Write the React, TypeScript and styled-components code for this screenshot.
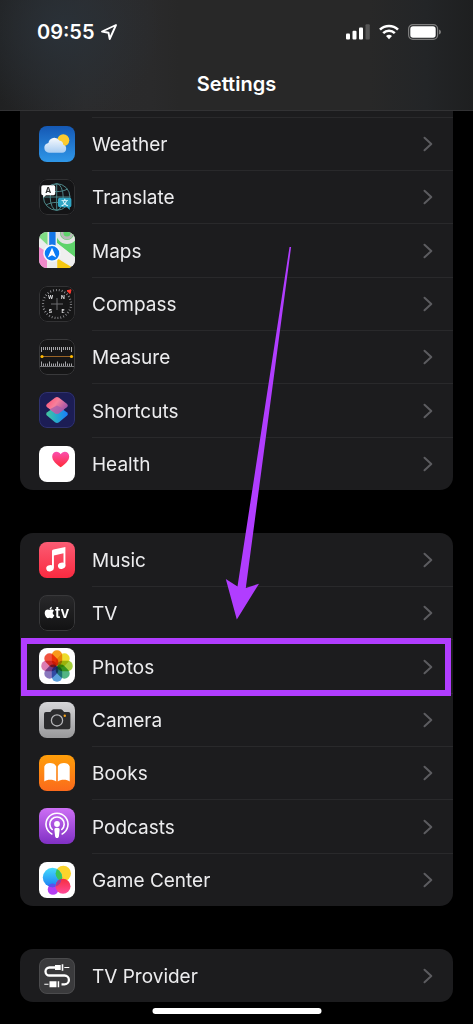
import React from 'react';
import styled, { createGlobalStyle, css } from 'styled-components';
import { FaApple } from 'react-icons/fa';

const GlobalStyle = createGlobalStyle`
  *, *::before, *::after { box-sizing: border-box; }
  body {
    margin: 0;
    background: #000;
    color: #ececee;
    font-family: Inter, 'Liberation Sans', sans-serif;
  }
`;

const Screen = styled.div`
  position: relative;
  min-height: 100vh;
  background: #000;
`;

const Header = styled.header`
  position: sticky;
  top: 0;
  z-index: 1;
  border-bottom: 1px solid #323234;
  background:
    radial-gradient(circle 96px at 64px 28px, #2a3138, #2a313800),
    linear-gradient(90deg, #202122, #2b2b2c 18%, #2a2a2b 32%, #282828 38%, #282828 78%, #232527 90%, #1e1f20);
`;

const StatusBar = styled.div`
  display: flex;
  justify-content: space-between;
  align-items: center;
  height: 64px;
  padding: 0 31px 0 37px;
`;

const StatusGroup = styled.div<{ $gap: number }>`
  display: flex;
  align-items: center;
  gap: ${(p) => p.$gap}px;
`;

const Clock = styled.time`
  font-size: 20px;
  font-weight: 600;
  line-height: 24px;
  color: #fff;
`;

const Title = styled.h1`
  margin: 0;
  padding: 8px 0 14px;
  font-size: 20px;
  font-weight: 600;
  line-height: 24px;
  text-align: center;
  color: #fff;
`;

const Content = styled.main`
  display: flex;
  flex-direction: column;
  gap: 43px;
  padding: 0 20px 21px;
`;

const Group = styled.ul<{ $continued?: boolean }>`
  margin: 0;
  padding: 0;
  list-style: none;
  background: #1c1c1e;
  border-radius: 13px;
  ${(p) =>
    p.$continued &&
    css`
      padding-top: 6px;
      border-top-left-radius: 0;
      border-top-right-radius: 0;
    `}
`;

const Label = styled.span`
  flex: 1;
  display: flex;
  align-items: center;
  justify-content: space-between;
  align-self: stretch;
  padding-right: 20px;
  border-top: 1px solid transparent;
`;

const Name = styled.span`
  padding-top: 2px;
`;

const Item = styled.li<{ $divider: boolean }>`
  position: relative;
  height: 53px;
  &:nth-child(3n) { height: 54px; }
  ${Label} { border-top-color: ${(p) => (p.$divider ? '#29292b' : 'transparent')}; }
`;

const RowLink = styled.a`
  display: flex;
  align-items: center;
  gap: 17px;
  height: 100%;
  padding-left: 19px;
  color: inherit;
  font-size: 19px;
  line-height: 24px;
  text-decoration: none;
`;

const Highlight = styled.span`
  position: absolute;
  inset: -1px 2px -3px 1px;
  z-index: 1;
  border: 6px solid #b13dff;
  pointer-events: none;
`;

const Pointer = styled.svg`
  position: absolute;
  top: 246px;
  left: calc(50% - 12px);
  z-index: 2;
  pointer-events: none;
`;

const HomeIndicator = styled.div`
  position: fixed;
  bottom: 10px;
  left: 50%;
  width: 169px;
  height: 6px;
  border-radius: 3px;
  background: #fff;
  transform: translateX(-50%);
`;

const Tile = styled.svg`
  display: block;
  flex: none;
  border-radius: 8px;
`;

const Frame = ({ fill, children, border }: { fill: string; border?: string; children: React.ReactNode }) => (
  <Tile width="36" height="36" viewBox="0 0 36 36" aria-hidden="true">
    <rect width="36" height="36" fill={fill} />
    {children}
    {border && <rect x=".5" y=".5" width="35" height="35" rx="7.5" fill="none" stroke={border} />}
  </Tile>
);

const Grad = ({ id, from, to }: { id: string; from: string; to: string }) => (
  <linearGradient id={id} x1="0" y1="0" x2="0" y2="1">
    <stop stopColor={from} />
    <stop offset="1" stopColor={to} />
  </linearGradient>
);

const Weather = () => (
  <Frame fill="url(#sky)">
    <Grad id="sky" from="#1558b4" to="#2f97e8" />
    <Grad id="cloud" from="#f6f9fd" to="#a9cdf2" />
    <circle cx="24.300" cy="14.200" r="6" fill="#fdcb2e" />
    <path d="M10 26.800a5 5 0 0 1-.6-9.900A5.900 5.900 0 0 1 20.300 14.600a4.800 4.800 0 0 1 4 4.200 4.100 4.100 0 0 1-1 8z" fill="url(#cloud)" />
  </Frame>
);

const Translate = () => (
  <Frame fill="#141416" border="#303032">
    <g fill="none" stroke="#4d8688" strokeWidth="1">
      <circle cx="17.700" cy="18" r="13.300" />
      <ellipse cx="17.700" cy="18" rx="6.500" ry="13.300" />
      <path d="M17.700 4.700v26.600M4.400 18h26.600M7 10c6 3.500 15.500 3.500 21.500 0M7 26c6-3.500 15.500-3.500 21.500 0" />
    </g>
    <path d="M4 6.300h10.500a1.700 1.700 0 0 1 1.700 1.700v6.500a1.700 1.700 0 0 1-1.700 1.700H7l-2.800 2.500V16.200A1.700 1.700 0 0 1 2.300 14.500V8A1.700 1.700 0 0 1 4 6.300z" fill="#fff" />
    <path d="M20.700 18.700h10a1.700 1.700 0 0 1 1.700 1.700v6.200a1.700 1.700 0 0 1-1.700 1.700l.1 2.700-2.800-2.700h-7.300a1.700 1.700 0 0 1-1.700-1.700v-6.200a1.700 1.700 0 0 1 1.700-1.700z" fill="#30a6c4" />
    <text x="9.300" y="14" fontSize="8" fontWeight="700" textAnchor="middle" fill="#333">A</text>
    <text x="25.700" y="26.300" fontSize="7" fontWeight="700" textAnchor="middle" fill="#e8fbff" fontFamily="'Noto Sans CJK SC', sans-serif">文</text>
  </Frame>
);

const Maps = () => (
  <Frame fill="#ececec">
    <path d="M0 0h8.500v13L0 5z" fill="#7fdc84" />
    <path d="M18 0h18v25L18 11z" fill="#5fd36b" />
    <circle cx="28" cy="1" r="9" fill="none" stroke="#e3e3e3" strokeWidth="4" />
    <circle cx="28" cy="1" r="5" fill="none" stroke="#b9b9b9" strokeWidth="3" />
    <path d="M0 15l8 5v16H0z" fill="#f08acb" />
    <path d="M18.500 26.500L34 36H18.500z" fill="#f7c913" />
    <path d="M14 8l22 17.500V36L14 22z" fill="#efefef" />
    <path d="M18.500 26.500l13 9.500h-13z" fill="#f7c913" />
    <path d="M10.200 0h6.400v18h-6.400z" fill="#1676e8" />
    <circle cx="13" cy="21.300" r="8" fill="#0a7cf5" stroke="#f5f8fa" strokeWidth="1.600" />
    <path d="M13 15.800l4.200 9.700-4.200-2.200-4.200 2.200z" fill="#fff" />
  </Frame>
);

const Compass = () => (
  <Frame fill="#161617" border="#323234">
    <circle cx="18" cy="18" r="14" fill="none" stroke="#98989c" strokeWidth="2.200" strokeDasharray=".8 2.132" />
    <path d="M18 12v12M12 18h12" stroke="#6c6c70" strokeWidth="1" />
    <g fill="#e4e4e6" fontSize="5" fontWeight="700" textAnchor="middle">
      <text x="24" y="13">N</text>
      <text x="11.500" y="13">W</text>
      <text x="11.500" y="26.600">S</text>
      <text x="24" y="26.600">E</text>
    </g>
    <path d="M28 4.700l4-.9-.9 3.800z" fill="#ff3b30" stroke="#ff3b30" />
  </Frame>
);

const Measure = () => (
  <Frame fill="#161617" border="#39393b">
    <g stroke="#a5a5a8" strokeWidth="1">
      {Array.from({ length: 16 }, (_, i) => (
        <path key={i} d={`M${2.5 + i * 2} 8v${i % 5 === 0 ? 5 : 3}M${2.5 + i * 2} 27.500v-${i % 4 === 0 ? 5 : 3}`} />
      ))}
    </g>
    <path d="M1 27.500h34" stroke="#77777a" />
    <path d="M3 17.500h30" stroke="#9a6426" strokeWidth="1" />
    <circle cx="3" cy="17.500" r="1.600" fill="#ffb800" />
    <circle cx="32.500" cy="17.500" r="1.600" fill="#ffb800" />
  </Frame>
);

const Shortcuts = () => (
  <Frame fill="#1c1d55" border="#30336e">
    <linearGradient id="scTeal" x1="0" y1="0" x2="1" y2="0">
      <stop stopColor="#45c69c" />
      <stop offset=".5" stopColor="#25a8cf" />
      <stop offset="1" stopColor="#1a7dff" />
    </linearGradient>
    <linearGradient id="scPink" x1="0" y1="0" x2="1" y2=".6">
      <stop stopColor="#ff4770" />
      <stop offset=".5" stopColor="#f7809b" />
      <stop offset="1" stopColor="#9a4fa8" />
    </linearGradient>
    <path d="M16 14.800q2-1 4 0l7.800 5.400q2 1.800 0 3.600L20 30.300q-2 1.300-4 0l-7.800-6.500q-2-1.800 0-3.600z" fill="url(#scTeal)" />
    <path d="M16 5.700q2-1.300 4 0l7.800 6q2 1.800 0 3.600L20 21.200q-2 1-4 0l-7.800-5.900q-2-1.800 0-3.600z" fill="url(#scPink)" />
    <path d="M10.800 17.300l7.200-3.900 7.200 3.900L20 21.200q-2 1-4 0z" fill="#a55fae" opacity=".75" />
  </Frame>
);

const Health = () => (
  <Frame fill="#fff">
    <Grad id="heart" from="#fb4fb0" to="#ff2b37" />
    <path d="M21.700 21.200c-4-2.700-8.500-6.300-8.500-10.700 0-2.800 2-4.800 4.400-4.800 1.700 0 3.200.9 4.100 2.500.9-1.600 2.400-2.500 4.100-2.500 2.400 0 4.400 2 4.400 4.800 0 4.400-4.500 8-8.500 10.700z" fill="url(#heart)" />
  </Frame>
);

const Music = () => (
  <Frame fill="url(#music)">
    <Grad id="music" from="#fb5c74" to="#fa2a40" />
    <path d="M14.500 7.500L26.400 5v18.500h-1.900V11.300L14.900 13.500v12.300H13V8.900q0-1.100 1.500-1.400z" fill="#fff" />
    <ellipse cx="11" cy="26.200" rx="3.800" ry="3.100" transform="rotate(-15 11 26.200)" fill="#fff" />
    <ellipse cx="22.700" cy="23.700" rx="3.800" ry="3.100" transform="rotate(-15 22.700 23.700)" fill="#fff" />
  </Frame>
);

const AppleTv = () => (
  <Frame fill="url(#tv)" border="#38383a">
    <Grad id="tv" from="#29292b" to="#121213" />
    <FaApple x="4" y="11" size={13} color="#fff" />
    <text x="16" y="23" fontSize="15" fontWeight="600" fill="#fff">tv</text>
  </Frame>
);

const petals = ['#f99a1c', '#eddc2c', '#a5cf3c', '#52b583', '#5a9fdc', '#8a78bd', '#dc7cb2', '#f0523f'];
const Photos = () => (
  <Frame fill="#fff">
    <g style={{ isolation: 'isolate' }}>
      {petals.map((color, i) => (
        <rect key={color} x="12.800" y="2.300" width="10.400" height="15.400" rx="5" fill={color} transform={`rotate(${i * 45} 18 18)`} style={{ mixBlendMode: 'multiply' }} />
      ))}
    </g>
  </Frame>
);

const Camera = () => (
  <Frame fill="url(#camera)">
    <Grad id="camera" from="#d6d6d8" to="#98989a" />
    <path d="M7 10h4.300l1.700-2q.7-.7 1.700-.7h7q1 0 1.700.7l1.700 2h4.300q2 0 2 2v13.300q0 2-2 2H7q-2 0-2-2V12q0-2 2-2z" fill="#2b2b2d" />
    <circle cx="18" cy="18.400" r="5.600" fill="none" stroke="#b5b5b8" strokeWidth="1.300" />
    <circle cx="25.800" cy="13.700" r="1.200" fill="#f5a31a" />
  </Frame>
);

const Books = () => (
  <Frame fill="url(#books)">
    <Grad id="books" from="#ff9f0a" to="#fb6a1c" />
    <path d="M5.300 11.500C6 9 8.500 8 11 8s5.500 1 6.200 3.500v15C15 24.500 8 24 5.300 26.500zM30.700 11.500C30 9 27.500 8 25 8s-5.500 1-6.200 3.500v15c2.200-2 9.200-2.500 11.900 0z" fill="#fff" />
  </Frame>
);

const Podcasts = () => (
  <Frame fill="url(#podcasts)">
    <Grad id="podcasts" from="#cd6ff5" to="#8030c4" />
    <g fill="none" stroke="#fff" strokeWidth="1.600" strokeLinecap="round">
      <path d="M12.800 26a11 11 0 1 1 10.400 0" />
      <path d="M13.200 21.500a7.200 7.200 0 1 1 9.600 0" />
    </g>
    <circle cx="18" cy="16" r="2.900" fill="#fff" />
    <path d="M18 19.800c2 0 2.800.8 2.600 2.400l-.7 6c-.2 1.200-.8 1.800-1.900 1.800s-1.700-.6-1.900-1.800l-.7-6c-.2-1.600.6-2.400 2.600-2.400z" fill="#fff" />
  </Frame>
);

const GameCenter = () => (
  <Frame fill="#fff">
    <Grad id="gcBlue" from="#46dcfa" to="#1a7ef5" />
    <Grad id="gcRed" from="#f62f3e" to="#ff4a9a" />
    <clipPath id="gcClip"><circle cx="13.500" cy="15.500" r="9.700" /></clipPath>
    <circle cx="14" cy="27.500" r="5.300" fill="#b43df2" />
    <circle cx="24.300" cy="11.500" r="7.700" fill="#fbd42c" />
    <circle cx="13.500" cy="15.500" r="9.700" fill="url(#gcBlue)" />
    <circle cx="24.300" cy="11.500" r="7.700" fill="#3ac45a" clipPath="url(#gcClip)" />
    <path d="M9 24a9.700 9.700 0 0 0 9 0 5.300 5.300 0 0 0-9 0z" fill="#5c50ee" />
    <circle cx="24" cy="24.300" r="7.500" fill="url(#gcRed)" />
    <path d="M17.500 20.500a7.500 7.500 0 0 1 5-3.600 9.700 9.700 0 0 1-5.500 7.700z" fill="#a03c9c" />
  </Frame>
);

const TvProvider = () => (
  <Frame fill="#3a3a3c" border="#4b4b4d">
    <path d="M16 9.500h-5.500a4 4 0 0 0 0 8h15a4.300 4.300 0 0 1 0 8.800h-3" fill="none" stroke="#fff" strokeWidth="2.300" />
    <path d="M16 7h5.700v5H16zM22.700 6.300h1.600v6.400h-1.600zM25.300 9h5v1h-5zM10.500 23.300h7v6h-7zM18.700 23.300h1.500v6h-1.500zM5.300 25.800h4.200v1H5.300z" fill="#fff" />
  </Frame>
);

const Chevron = () => (
  <svg width="10" height="16" viewBox="0 0 10 16" fill="none" aria-hidden="true">
    <path d="M1.500 1.700L8.300 8l-6.800 6.300" stroke="#5c5c60" strokeWidth="2" strokeLinecap="round" strokeLinejoin="round" />
  </svg>
);

type Entry = { name: string; Icon: React.FC; highlighted?: boolean };

const groups: Entry[][] = [
  [
    { name: 'Weather', Icon: Weather },
    { name: 'Translate', Icon: Translate },
    { name: 'Maps', Icon: Maps },
    { name: 'Compass', Icon: Compass },
    { name: 'Measure', Icon: Measure },
    { name: 'Shortcuts', Icon: Shortcuts },
    { name: 'Health', Icon: Health },
  ],
  [
    { name: 'Music', Icon: Music },
    { name: 'TV', Icon: AppleTv },
    { name: 'Photos', Icon: Photos, highlighted: true },
    { name: 'Camera', Icon: Camera },
    { name: 'Books', Icon: Books },
    { name: 'Podcasts', Icon: Podcasts },
    { name: 'Game Center', Icon: GameCenter },
  ],
  [{ name: 'TV Provider', Icon: TvProvider }],
];

export default function App() {
  return (
    <Screen>
      <GlobalStyle />
      <Header>
        <StatusBar>
          <StatusGroup $gap={5}>
            <Clock>09:55</Clock>
            <svg width="18" height="18" viewBox="0 0 18 18" fill="none" aria-label="Location in use">
              <path d="M16 2L2 8.500l6.500 1.200L9.700 16z" stroke="#fff" strokeWidth="1.900" strokeLinejoin="round" />
            </svg>
          </StatusGroup>
          <StatusGroup $gap={9}>
            <svg width="24" height="16" viewBox="0 0 24 16" fill="#fff" aria-label="Signal">
              <rect x="0" y="9.500" width="4" height="6" rx="1" />
              <rect x="6.500" y="6.700" width="4" height="8.800" rx="1" />
              <rect x="13" y="3.500" width="4" height="12" rx="1" />
              <rect x="19.500" y=".3" width="4.300" height="15.200" rx="1" fill="#565656" />
            </svg>
            <svg width="20" height="16" viewBox="0 0 20 16" fill="none" stroke="#fff" strokeWidth="2.600" aria-label="Wi-Fi">
              <path d="M1 5.600a13 13 0 0 1 18 0M4.200 9.100a8.400 8.400 0 0 1 11.600 0" />
              <path d="M10 15.300l-3-3.200a4.300 4.300 0 0 1 6 0z" fill="#fff" stroke="none" />
            </svg>
            <svg width="34" height="16" viewBox="0 0 34 16" aria-label="Battery">
              <rect x=".6" y=".6" width="29" height="14.800" rx="4.300" fill="none" stroke="#7e7e7e" strokeWidth="1.200" />
              <rect x="2.300" y="2.300" width="25.400" height="11.400" rx="2.700" fill="#fff" />
              <path d="M31 5.500q2 .7 2 2.500t-2 2.500z" fill="#7e7e7e" />
            </svg>
          </StatusGroup>
        </StatusBar>
        <Title>Settings</Title>
      </Header>
      <Content>
        {groups.map((entries, g) => (
          <Group key={g} $continued={g === 0}>
            {entries.map(({ name, Icon, highlighted }, i) => (
              <Item key={name} $divider={g === 0 || i > 0}>
                <RowLink href="#">
                  <Icon />
                  <Label>
                    <Name>{name}</Name>
                    <Chevron />
                  </Label>
                </RowLink>
                {highlighted && <Highlight />}
              </Item>
            ))}
          </Group>
        ))}
      </Content>
      <Pointer width="68" height="374" viewBox="0 0 68 374" aria-hidden="true">
        <path d="M64.500 1h1.600L20.800 342l13.200-4.300L11.800 373.500.8 333l11.700 7.500z" fill="#b13dff" />
      </Pointer>
      <HomeIndicator />
    </Screen>
  );
}
